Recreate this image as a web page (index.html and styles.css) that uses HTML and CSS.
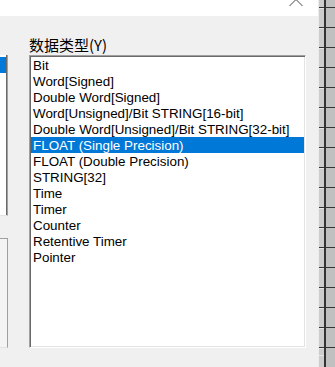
FILE: index.html
```html
<!DOCTYPE html>
<html>
<head>
  <title>数据类型</title>
  <link rel="stylesheet" href="styles.css">
</head>
<body>
  <div class="screen">
    <div class="dialog">
      <div class="titlebar">
        <svg class="close" width="14" height="8" viewBox="0 0 14 8">
          <polyline points="0.5,7 7,0.5 13.5,7" fill="none" stroke="#444" stroke-width="1"/>
        </svg>
      </div>
      <div class="dialog-body">
        <div class="side">
          <div class="side-list"><div class="side-sel"></div></div>
          <div class="side-box"></div>
        </div>
        <div class="type-field">
          <label class="type-label">数据类型(Y)</label>
          <ul class="type-list">
            <li>Bit</li>
            <li>Word[Signed]</li>
            <li>Double Word[Signed]</li>
            <li>Word[Unsigned]/Bit STRING[16-bit]</li>
            <li>Double Word[Unsigned]/Bit STRING[32-bit]</li>
            <li class="selected">FLOAT (Single Precision)</li>
            <li>FLOAT (Double Precision)</li>
            <li>STRING[32]</li>
            <li>Time</li>
            <li>Timer</li>
            <li>Counter</li>
            <li>Retentive Timer</li>
            <li>Pointer</li>
          </ul>
        </div>
      </div>
    </div>
    <div class="grid">
      <div class="grid-head"></div>
      <div class="grid-rule"></div>
      <div class="grid-cells"></div>
    </div>
  </div>
</body>
</html>
```

FILE: styles.css
```css
body {
  margin: 0;
  font-family: "Liberation Sans", Arial, sans-serif;
  font-size: 13.4px;
  color: #000;
}

.screen {
  display: flex;
  height: 367px;
  overflow: hidden;
}

.dialog {
  width: 318px;
  background: #f0f0f0;
  display: flex;
  flex-direction: column;
}

.titlebar {
  height: 16px;
  background: #fff;
  display: flex;
  justify-content: flex-end;
  align-items: flex-start;
  padding-right: 15px;
}

.close {
  display: block;
  margin-top: -1px;
}

.dialog-body {
  display: flex;
  gap: 21px;
  padding-top: 19px;
}

.side {
  width: 8px;
  margin-top: 20px;
  display: flex;
  flex-direction: column;
}

.side-list {
  height: 161px;
  box-sizing: border-box;
  background: #fff;
  border-right: 1px solid #a0a0a0;
  border-bottom: 1px solid #e3e3e3;
  box-shadow: inset -1px 0 #696969;
  padding-top: 2px;
}

.side-sel {
  height: 16px;
  width: 6px;
  background: #0078d7;
}

.side-box {
  height: 110px;
  margin-top: 22px;
  box-sizing: border-box;
  background: #f4f4f4;
  border-top: 1px solid #a0a0a0;
  border-right: 1px solid #a0a0a0;
  border-bottom: 1px solid #e3e3e3;
}

.type-field {
  display: flex;
  flex-direction: column;
}

.type-label {
  display: block;
  height: 20px;
  line-height: 19px;
  font-family: "Noto Sans CJK SC", "Noto Sans", sans-serif;
  font-size: 15px;
  color: #000;
}

.type-list {
  list-style: none;
  margin: 0;
  padding: 1px;
  width: 277px;
  height: 293px;
  box-sizing: border-box;
  background: #fff;
  border-top: 1px solid #a0a0a0;
  border-left: 1px solid #a0a0a0;
  border-right: 1px solid #fff;
  border-bottom: 1px solid #fff;
  box-shadow: inset 1px 1px #696969, inset -1px -1px #e3e3e3;
}

.type-list li {
  height: 16px;
  line-height: 17px;
  padding-left: 2px;
  white-space: nowrap;
  overflow: hidden;
}

.type-list .selected {
  background: #0078d7;
  color: #fff;
}

.grid {
  flex: 1;
  display: flex;
}

.grid-head {
  width: 6px;
  background:
    repeating-linear-gradient(to bottom, #e6e6e6 0 1px, #cdcdcd 1px 19px, #333 19px 20px),
    #cdcdcd;
  background-position: 0 -12px;
  box-shadow: inset 1px 0 #ececec;
}

.grid-rule {
  width: 2px;
  background: #333;
}

.grid-cells {
  flex: 1;
  background: repeating-linear-gradient(to bottom, #c0c0c0 0 19px, #333 19px 20px);
  background-position: 0 -12px;
}
```
